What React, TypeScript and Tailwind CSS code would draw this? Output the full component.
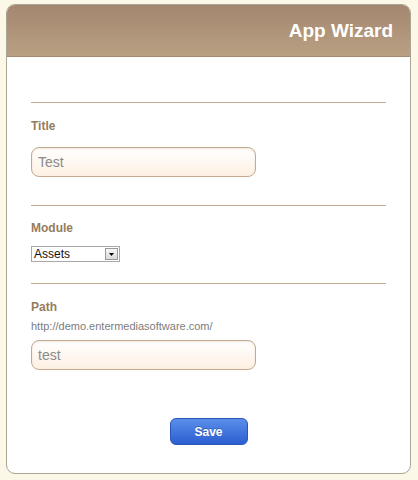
export default function App() {
  return (
    <div className="min-h-[480px] w-[418px] bg-[#fcf8e8] pt-[4px] font-['Liberation_Sans',Arial,sans-serif]">
      <div className="mx-[6px] w-[405px] overflow-hidden rounded-[9px] border border-[#ada594] bg-white">
        {/* Header */}
        <div className="flex h-[52px] items-center justify-end border-b border-[#a48c74] bg-gradient-to-b from-[#a38770] to-[#b9a083] pr-[17px] pt-[2px]">
          <h1 className="text-[19px] font-bold text-white">App Wizard</h1>
        </div>

        <div className="px-[24px] pt-[45px] pb-[28px]">
          <div className="h-[1px] bg-[#c2a990]" />
          <p className="mt-[16px] text-[12px] font-bold leading-[14px] text-[#957c5e]">Title</p>
          <div className="mt-[14px] flex h-[30px] w-[225px] items-center rounded-[8px] border border-[#c6aa8e] bg-gradient-to-b from-white to-[#fdf0e3] pl-[6px] text-[14px] text-[#8a8a8a] shadow-[inset_0_1px_2px_rgba(160,130,100,0.2)]">
            Test
          </div>

          <div className="mt-[28px] h-[1px] bg-[#c2a990]" />
          <p className="mt-[15px] text-[12px] font-bold leading-[14px] text-[#957c5e]">Module</p>
          <div className="mt-[11px] flex h-[16px] w-[89px] items-center border border-[#a8a8a8] bg-white pl-[2px]">
            <span className="flex-1 text-[12px] leading-[14px] text-[#111]">Assets</span>
            <span className="mr-[1px] flex h-[12px] w-[13px] items-center justify-center border border-[#9a9a9a] bg-gradient-to-b from-[#f6f6f6] to-[#dadada]">
              <svg width="5" height="3" viewBox="0 0 5 3">
                <path d="M0 0h5L2.5 3z" fill="#000" />
              </svg>
            </span>
          </div>

          <div className="mt-[21px] h-[1px] bg-[#c2a990]" />
          <p className="mt-[16px] text-[12px] font-bold leading-[14px] text-[#957c5e]">Path</p>
          <p className="mt-[6px] text-[11px] leading-[13px] text-[#7d7d7d]">http://demo.entermediasoftware.com/</p>
          <div className="mt-[7px] flex h-[30px] w-[225px] items-center rounded-[8px] border border-[#c6aa8e] bg-gradient-to-b from-white to-[#fdf0e3] pl-[6px] text-[14px] text-[#8a8a8a] shadow-[inset_0_1px_2px_rgba(160,130,100,0.2)]">
            test
          </div>

          <div className="mt-[48px] flex justify-center">
            <button className="h-[27px] w-[78px] rounded-[6px] border border-[#2b55b8] bg-gradient-to-b from-[#5a8eea] to-[#2c5ed0] text-[12px] font-bold text-white [text-shadow:0_-1px_0_rgba(0,0,0,0.25)]">
              Save
            </button>
          </div>
        </div>
      </div>
    </div>
  )
}
